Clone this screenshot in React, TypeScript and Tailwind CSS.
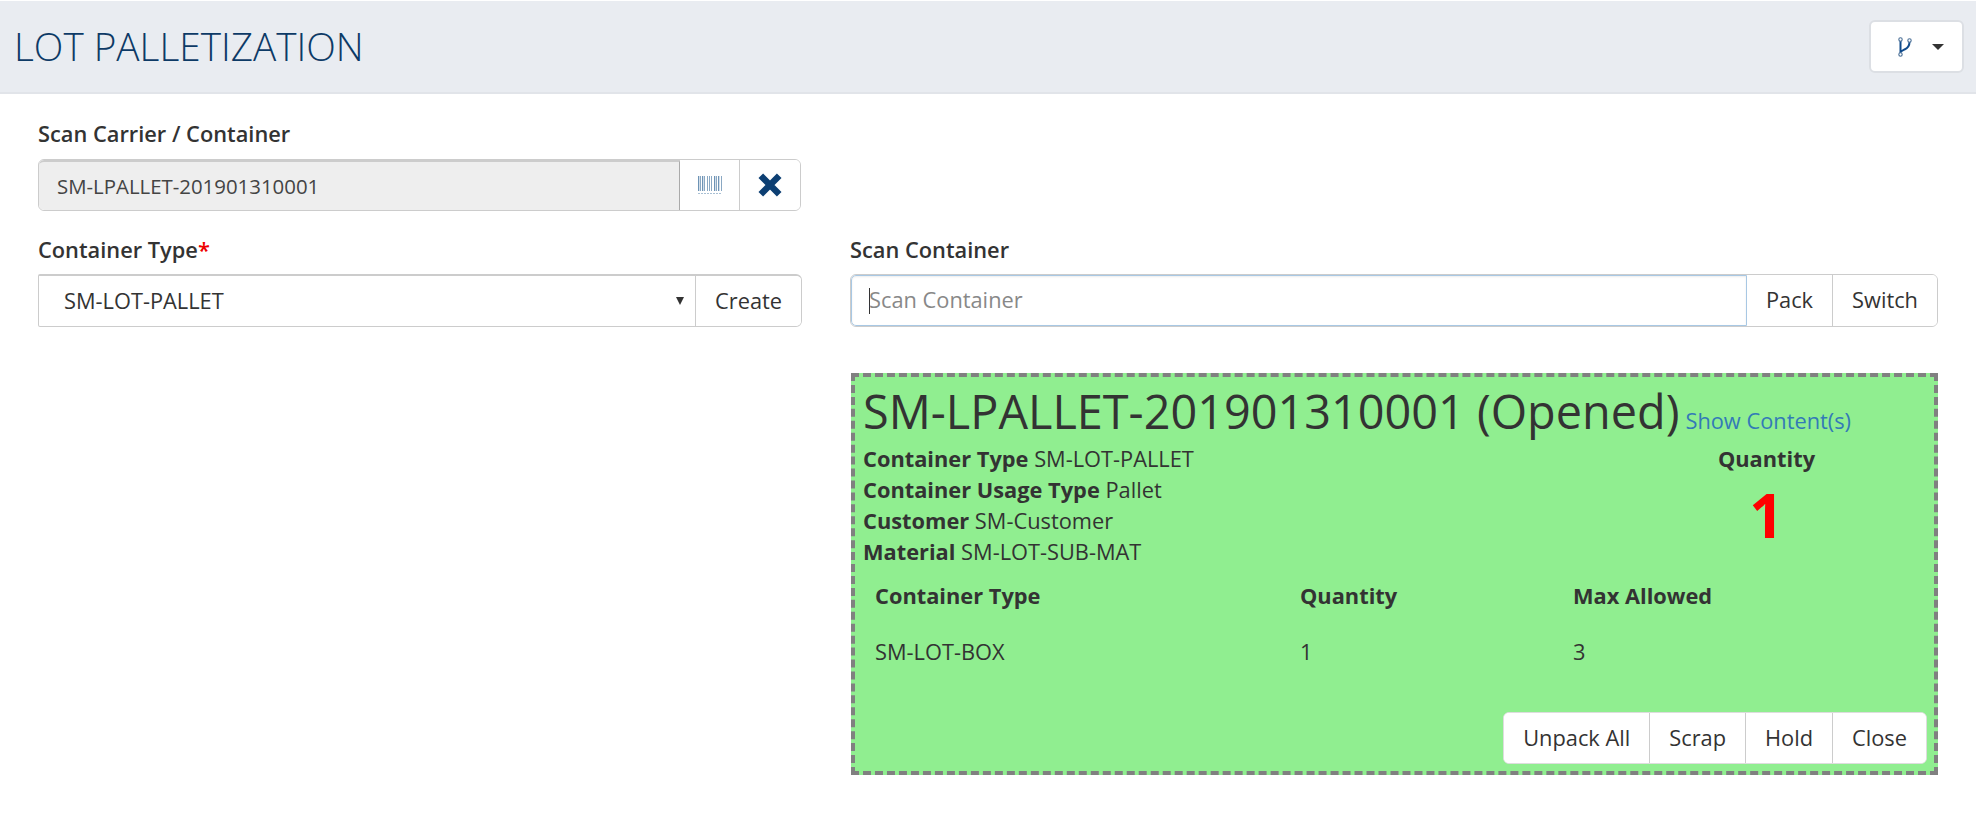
const sans = "font-['Open_Sans',sans-serif]";

function BarcodeIcon() {
  return (
    <svg width="24" height="20" viewBox="0 0 24 20" fill="none">
      {[0, 2, 4, 6, 9, 11, 13, 16, 18, 20, 23].map((x) => (
        <rect key={x} x={x} y="1" width={x % 4 === 0 ? 1.3 : 0.8} height="15" fill="#6d93b5" />
      ))}
      <path d="M0 18.5h24" stroke="#a9c0d4" strokeWidth="1" strokeDasharray="2 1" />
    </svg>
  );
}

function FlowIcon() {
  return (
    <svg width="14" height="20" viewBox="0 0 14 20" fill="none">
      <path d="M2.5 4v12M11.5 5c0 4-1.500 6-5 7.500l-3.500 2" stroke="#0f4a8a" strokeWidth="2" />
      <circle cx="2.500" cy="2.500" r="1.700" fill="#fff" stroke="#4a6f96" strokeWidth="1.100" />
      <circle cx="11.500" cy="3.500" r="1.700" fill="#fff" stroke="#4a6f96" strokeWidth="1.100" />
      <circle cx="2.500" cy="17.500" r="1.700" fill="#fff" stroke="#4a6f96" strokeWidth="1.100" />
    </svg>
  );
}

function GroupButton({ label, last }: { label: string; last?: boolean }) {
  return (
    <button className={`h-full px-[19px] text-[21.8px] text-[#333] bg-white ${last ? "" : "border-r border-[#ccc]"}`}>
      {label}
    </button>
  );
}

function Row({ name, value }: { name: string; value: string }) {
  return (
    <div className="h-[31px] leading-[31px]">
      <span className="font-bold">{name}</span> {value}
    </div>
  );
}

export default function App() {
  return (
    <div className={`${sans} min-h-[826px] bg-white text-[#333]`}>
      <header className="flex h-[94px] items-center justify-between border-t border-b-2 border-t-white border-b-[#e1e4e9] bg-[#e9ecf1] pl-[14px] pr-[12px]">
        <h1 className="text-[38.7px] font-light text-[#0d3a66]">LOT PALLETIZATION</h1>
        <button className="flex h-[53px] w-[95px] items-center justify-center gap-[20px] rounded-[6px] border-2 border-[#dcdfe4] bg-white pl-[8px]">
          <FlowIcon />
          <span className="h-0 w-0 border-x-[6px] border-t-[6px] border-x-transparent border-t-[#333]" />
        </button>
      </header>

      <main className="pl-[38px] pr-[38px] pt-[25px]">
        <div className="text-[21.8px] font-semibold leading-[30px] text-[#333]">Scan Carrier / Container</div>
        <div className="mt-[10px] flex h-[52px] w-[763px] overflow-hidden rounded-[6px] border border-[#ccc]">
          <div className="flex flex-1 items-center rounded-l-[5px] border-r border-[#aaa] border-t-2 border-t-[#ccc] bg-[#eee] pl-[18px] text-[20.4px] text-[#444]">
            SM-LPALLET-201901310001
          </div>
          <div className="flex w-[60px] items-center justify-center border-r border-[#ccc] bg-white">
            <BarcodeIcon />
          </div>
          <div className="flex w-[60px] items-center justify-center bg-white">
            <svg width="26" height="26" viewBox="0 0 24 24" fill="none">
              <path d="M3.500 3.500l17 17M20.500 3.500l-17 17" stroke="#0d3f73" strokeWidth="6" />
            </svg>
          </div>
        </div>

        <div className="mt-[24px] grid grid-cols-[764px_1fr] gap-x-[48px]">
          <div>
            <div className="text-[21.8px] font-semibold leading-[30px]">
              Container Type<span className="text-[#e00]">*</span>
            </div>
            <div className="mt-[9px] flex h-[53px] overflow-hidden rounded-l-[2px] rounded-r-[6px] border border-[#ccc] border-t-2">
              <div className="flex flex-1 items-center justify-between border-r border-[#ccc] pl-[25px] pr-[11px] text-[21.8px] text-[#333]">
                SM-LOT-PALLET
                <span className="h-0 w-0 border-x-[4px] border-t-[8px] border-x-transparent border-t-[#333]" />
              </div>
              <GroupButton label="Create" last />
            </div>
          </div>

          <div>
            <div className="text-[21.8px] font-semibold leading-[30px]">Scan Container</div>
            <div className="mt-[9px] flex h-[53px] overflow-hidden rounded-[6px] border border-[#ccc]">
              <div className="flex flex-1 items-center rounded-l-[5px] border border-[#a8c8e4] shadow-[inset_0_1px_2px_rgba(0,0,0,0.08),0_0_6px_rgba(102,175,233,0.4)] pl-[17px] text-[21.8px] text-[#888]">
                <span className="mr-[-1px] h-[26px] w-px bg-[#333]" />
                Scan Container
              </div>
              <GroupButton label="Pack" />
              <GroupButton label="Switch" last />
            </div>

            <section className="ml-px mt-[46px] h-[402px] border-4 border-dashed border-[#808080] bg-[#90ee90] pl-[8px] pr-[7px] text-[21.8px]">
              <div className="flex items-baseline gap-[6px] pt-[2px]">
                <span className="text-[46.8px] leading-[64px]">SM-LPALLET-201901310001 (Opened)</span>
                <a className="text-[21.8px] text-[#337ab7]">Show Content(s)</a>
              </div>
              <div className="flex">
                <div className="flex-1">
                  <Row name="Container Type" value="SM-LOT-PALLET" />
                  <Row name="Container Usage Type" value="Pallet" />
                  <Row name="Customer" value="SM-Customer" />
                  <Row name="Material" value="SM-LOT-SUB-MAT" />
                </div>
                <div className="w-[304px] pr-[17px] text-center">
                  <div className="h-[31px] font-bold leading-[31px]">Quantity</div>
                  <div className="mt-[6px] text-[60px] font-bold leading-[70px] text-[#ff0000]">1</div>
                </div>
              </div>
              <div className="mt-[9px] grid grid-cols-[425px_273px_1fr] pl-[12px]">
                <div className="h-[40px] font-bold leading-[40px]">Container Type</div>
                <div className="h-[40px] font-bold leading-[40px]">Quantity</div>
                <div className="h-[40px] font-bold leading-[40px]">Max Allowed</div>
                <div className="mt-[16px] leading-[40px]">SM-LOT-BOX</div>
                <div className="mt-[16px] leading-[40px]">1</div>
                <div className="mt-[16px] leading-[40px]">3</div>
              </div>
              <div className="mt-[40px] flex justify-end">
                <div className="flex h-[52px] overflow-hidden rounded-[6px] border border-[#ddd] bg-white">
                  <GroupButton label="Unpack All" />
                  <GroupButton label="Scrap" />
                  <GroupButton label="Hold" />
                  <GroupButton label="Close" last />
                </div>
              </div>
            </section>
          </div>
        </div>
      </main>
    </div>
  );
}
